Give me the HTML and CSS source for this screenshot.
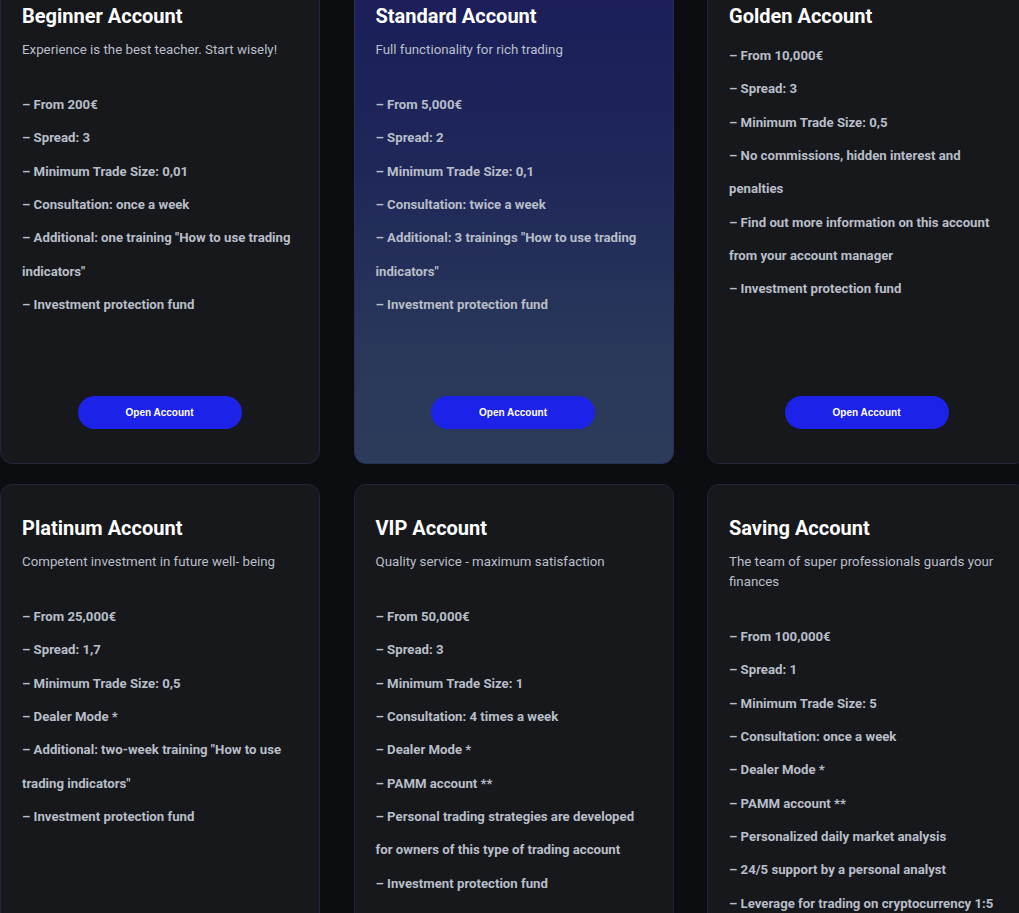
FILE: index.html
```html
<!DOCTYPE html>
<html lang="en">
<head>
<meta charset="utf-8">
<title>Accounts</title>
<link rel="stylesheet" href="styles.css">
</head>
<body>
<div class="grid">
  <div class="card">
    <h3 class="title">Beginner Account</h3>
    <p class="sub">Experience is the best teacher. Start wisely!</p>
    <ul class="list">
      <li>– From 200€</li>
      <li>– Spread: 3</li>
      <li>– Minimum Trade Size: 0,01</li>
      <li>– Consultation: once a week</li>
      <li>– Additional: one training "How to use trading indicators"</li>
      <li>– Investment protection fund</li>
    </ul>
    <a class="btn">Open Account</a>
  </div>
  <div class="card featured">
    <h3 class="title">Standard Account</h3>
    <p class="sub">Full functionality for rich trading</p>
    <ul class="list">
      <li>– From 5,000€</li>
      <li>– Spread: 2</li>
      <li>– Minimum Trade Size: 0,1</li>
      <li>– Consultation: twice a week</li>
      <li>– Additional: 3 trainings "How to use trading indicators"</li>
      <li>– Investment protection fund</li>
    </ul>
    <a class="btn">Open Account</a>
  </div>
  <div class="card">
    <h3 class="title">Golden Account</h3>
    <ul class="list">
      <li>– From 10,000€</li>
      <li>– Spread: 3</li>
      <li>– Minimum Trade Size: 0,5</li>
      <li>– No commissions, hidden interest and penalties</li>
      <li>– Find out more information on this account from your account manager</li>
      <li>– Investment protection fund</li>
    </ul>
    <a class="btn">Open Account</a>
  </div>
  <div class="card">
    <h3 class="title">Platinum Account</h3>
    <p class="sub">Competent investment in future well- being</p>
    <ul class="list">
      <li>– From 25,000€</li>
      <li>– Spread: 1,7</li>
      <li>– Minimum Trade Size: 0,5</li>
      <li>– Dealer Mode *</li>
      <li>– Additional: two-week training "How to use trading indicators"</li>
      <li>– Investment protection fund</li>
    </ul>
    <a class="btn">Open Account</a>
  </div>
  <div class="card">
    <h3 class="title">VIP Account</h3>
    <p class="sub">Quality service - maximum satisfaction</p>
    <ul class="list">
      <li>– From 50,000€</li>
      <li>– Spread: 3</li>
      <li>– Minimum Trade Size: 1</li>
      <li>– Consultation: 4 times a week</li>
      <li>– Dealer Mode *</li>
      <li>– PAMM account **</li>
      <li>– Personal trading strategies are developed for owners of this type of trading account</li>
      <li>– Investment protection fund</li>
    </ul>
    <a class="btn">Open Account</a>
  </div>
  <div class="card">
    <h3 class="title">Saving Account</h3>
    <p class="sub">The team of super professionals guards your finances</p>
    <ul class="list">
      <li>– From 100,000€</li>
      <li>– Spread: 1</li>
      <li>– Minimum Trade Size: 5</li>
      <li>– Consultation: once a week</li>
      <li>– Dealer Mode *</li>
      <li>– PAMM account **</li>
      <li>– Personalized daily market analysis</li>
      <li>– 24/5 support by a personal analyst</li>
      <li>– Leverage for trading on cryptocurrency 1:5</li>
      <li>– Investment protection fund</li>
    </ul>
    <a class="btn">Open Account</a>
  </div>
</div>
</body>
</html>
```

FILE: styles.css
```css
html, body {
  margin: 0;
  padding: 0;
  background: #0b0d11;
  overflow: hidden;
}
body {
  font-family: Roboto, "Liberation Sans", sans-serif;
}
.grid {
  display: grid;
  grid-template-columns: repeat(3, 320px);
  column-gap: 33.5px;
  row-gap: 20px;
  margin-top: -28px;
  width: 1040px;
}
.card {
  box-sizing: border-box;
  min-height: 492px;
  display: flex;
  flex-direction: column;
  background: #17181b;
  border: 1px solid #21223c;
  border-radius: 12px;
  padding: 31px 22px 34px 21px;
}
.card.featured {
  background: linear-gradient(180deg, #1b1d5a 0%, #1f2759 40%, #2a395a 80%, #2c3b5a 100%);
  border-color: #2a3158;
}
.title {
  margin: 0 0 12px;
  font-size: 20px;
  line-height: 24px;
  font-weight: 700;
  color: #ffffff;
}
.sub {
  margin: 0 0 28px;
  font-size: 13.3px;
  line-height: 20px;
  color: #b9bfcb;
}
.list {
  list-style: none;
  margin: 0;
  padding: 0;
}
.card > .title + .list {
  margin-top: -1px;
}
.list li {
  font-size: 13.2px;
  line-height: 33.33px;
  font-weight: 700;
  color: #b8bec9;
}
.btn {
  margin-top: auto;
  align-self: center;
  width: 164px;
  height: 33px;
  border-radius: 17px;
  background: #1c22e8;
  color: #ffffff;
  font-family: "Liberation Sans", Arial, sans-serif;
  font-weight: 700;
  font-size: 10px;
  display: flex;
  align-items: center;
  justify-content: center;
}
```
